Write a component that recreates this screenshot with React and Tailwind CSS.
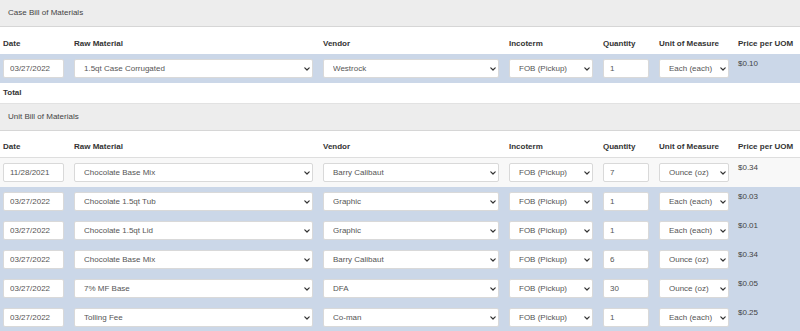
import React from "react";

const caseRows = [
  { date: "03/27/2022", mat: "1.5qt Case Corrugated", vendor: "Westrock", inco: "FOB (Pickup)", qty: "1", uom: "Each (each)", price: "$0.10", hl: true },
];

const unitRows = [
  { date: "11/28/2021", mat: "Chocolate Base Mix", vendor: "Barry Calibaut", inco: "FOB (Pickup)", qty: "7", uom: "Ounce (oz)", price: "$0.34", hl: false },
  { date: "03/27/2022", mat: "Chocolate 1.5qt Tub", vendor: "Graphic", inco: "FOB (Pickup)", qty: "1", uom: "Each (each)", price: "$0.03", hl: true },
  { date: "03/27/2022", mat: "Chocolate 1.5qt Lid", vendor: "Graphic", inco: "FOB (Pickup)", qty: "1", uom: "Each (each)", price: "$0.01", hl: true },
  { date: "03/27/2022", mat: "Chocolate Base Mix", vendor: "Barry Calibaut", inco: "FOB (Pickup)", qty: "6", uom: "Ounce (oz)", price: "$0.34", hl: true },
  { date: "03/27/2022", mat: "7% MF Base", vendor: "DFA", inco: "FOB (Pickup)", qty: "30", uom: "Ounce (oz)", price: "$0.05", hl: true },
  { date: "03/27/2022", mat: "Tolling Fee", vendor: "Co-man", inco: "FOB (Pickup)", qty: "1", uom: "Each (each)", price: "$0.25", hl: true },
];

function Chevron() {
  return (
    <svg className="pointer-events-none absolute right-[3px] top-[8px]" width="6" height="4" viewBox="0 0 6 4" fill="none">
      <path d="M0.8 0.8 L3 3 L5.2 0.8" stroke="#333" strokeWidth="1.2" strokeLinecap="round" strokeLinejoin="round" />
    </svg>
  );
}

function Select({ value, w, pl = "pl-[9px]" }) {
  return (
    <div className={`relative ${w}`}>
      <select
        defaultValue={value}
        className={`block h-[19px] w-full appearance-none rounded-[2px] border border-[#d9d9d9] bg-white ${pl} pr-[12px] text-[8px] leading-[17px] text-[#555] outline-none`}
      >
        <option>{value}</option>
      </select>
      <Chevron />
    </div>
  );
}

function TextBox({ value, w }) {
  return (
    <input
      readOnly
      value={value}
      className={`block h-[19px] ${w} rounded-[2px] border border-[#d9d9d9] bg-white pl-[6px] text-[8px] leading-[17px] text-[#555] outline-none`}
    />
  );
}

function HeaderRow({ border }) {
  const cls = "text-[8px] font-bold leading-[9px] text-[#333]";
  return (
    <div className={`flex h-[27px] items-end bg-white px-[3px] pb-[6px] ${border ? "border-b border-[#dedede] h-[26px] pb-[5px]" : ""}`}>
      <div className={`w-[61px] ${cls}`}>Date</div>
      <div className={`ml-[10px] w-[239px] ${cls}`}>Raw Material</div>
      <div className={`ml-[10px] w-[176px] ${cls}`}>Vendor</div>
      <div className={`ml-[10px] w-[84px] ${cls}`}>Incoterm</div>
      <div className={`ml-[10px] w-[46px] ${cls}`}>Quantity</div>
      <div className={`ml-[10px] w-[70px] ${cls}`}>Unit of Measure</div>
      <div className={`ml-[9px] flex-1 ${cls}`}>Price per UOM</div>
    </div>
  );
}

function DataRow({ r }) {
  return (
    <div className={`flex h-[29px] items-start px-[3px] pt-[5px] ${r.hl ? "bg-[#cbd7e8]" : "bg-[#f8f8f8]"}`}>
      <TextBox value={r.date} w="w-[61px]" />
      <div className="ml-[10px]"><Select value={r.mat} w="w-[239px]" /></div>
      <div className="ml-[10px]"><Select value={r.vendor} w="w-[176px]" /></div>
      <div className="ml-[10px]"><Select value={r.inco} w="w-[84px]" /></div>
      <div className="ml-[10px]"><TextBox value={r.qty} w="w-[46px]" /></div>
      <div className="ml-[10px]"><Select value={r.uom} w="w-[70px]" /></div>
      <div className="ml-[9px] flex-1 text-[8px] leading-[10px] text-[#444]">{r.price}</div>
    </div>
  );
}

function SectionTitle({ title, top }) {
  return (
    <div className={`flex items-center bg-[#ededed] pl-[8px] text-[8px] text-[#444] border-b border-[#d6d6d6] ${top ? "h-[28px] border-t border-t-[#e2e2e2]" : "h-[27px]"}`}>
      {title}
    </div>
  );
}

export default function App() {
  return (
    <div className="h-[331px] w-[800px] overflow-hidden bg-white" style={{ fontFamily: '"Liberation Sans", Arial, sans-serif' }}>
      <SectionTitle title="Case Bill of Materials" />
      <HeaderRow />
      {caseRows.map((r, i) => <DataRow key={i} r={r} />)}
      <div className="flex h-[20px] items-center bg-white px-[3px] text-[8px] font-bold text-[#333]">Total</div>
      <SectionTitle title="Unit Bill of Materials" top />
      <HeaderRow border />
      {unitRows.map((r, i) => <DataRow key={i} r={r} />)}
    </div>
  );
}
